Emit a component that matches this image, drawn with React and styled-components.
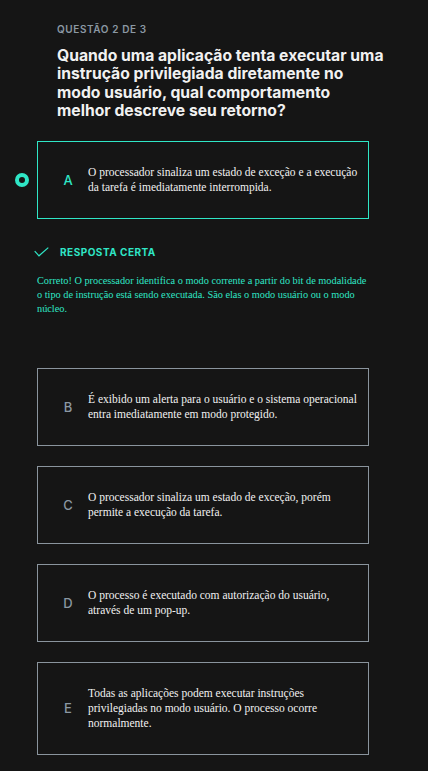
import React from 'react';
import styled, {createGlobalStyle} from 'styled-components';

//-- Colors --//
const colors = {
	bg: '#151515',
	teal: '#2fe6c6',
	text: '#f1f1f1',
	muted: '#8b98a3',
	border: '#8a949d',
};

const GlobalStyle = createGlobalStyle`
	html, body {
		margin: 0;
		padding: 0;
		background: ${colors.bg};
	}
	* {
		box-sizing: border-box;
	}
`;

const Page = styled.div`
	width: 428px;
	min-height: 771px;
	background: ${colors.bg};
	padding: 22px 59px 20px 0;
	font-family: Inter, 'Noto Sans', sans-serif;
`;

const Header = styled.div`
	padding-left: 57px;
	margin-right: -30px;
`;

const Counter = styled.div`
	color: ${colors.muted};
	font-size: 10px;
	font-weight: 600;
	letter-spacing: 0.6px;
	text-transform: uppercase;
	line-height: 14px;
`;

const Title = styled.h1`
	margin: 11px 0 0;
	max-width: 329px;
	color: ${colors.text};
	font-size: 15.7px;
	font-weight: 700;
	line-height: 18.4px;
	letter-spacing: 0;
`;

const Options = styled.div`
	margin-top: 20px;
	display: flex;
	flex-direction: column;
	gap: 20px;
`;

const OptionRow = styled.div`
	display: grid;
	grid-template-columns: 37px 1fr;
	align-items: center;
`;

const Ring = styled.span`
	display: block;
	width: 14px;
	height: 14px;
	margin-left: 15px;
	border-radius: 50%;
	border: 4px solid ${colors.teal};
	visibility: ${({$on}) => ($on ? 'visible' : 'hidden')};
`;

const OptionBox = styled.div`
	display: flex;
	align-items: center;
	padding: 23px 10px 23px 24px;
	border: 1px solid ${({$selected}) => ($selected ? colors.teal : colors.border)};
	min-height: 76px;
`;

const Letter = styled.span`
	flex: 0 0 12px;
	margin-right: 14px;
	text-align: center;
	color: ${({$selected}) => ($selected ? colors.teal : colors.muted)};
	font-size: 13px;
	font-weight: 500;
`;

const OptionText = styled.p`
	margin: 0;
	color: ${colors.text};
	font-family: 'Liberation Serif', serif;
	font-size: 11.5px;
	line-height: 15px;
`;

const Feedback = styled.div`
	padding-left: 37px;
	margin-top: 27px;
	margin-bottom: 32px;
`;

const Verdict = styled.div`
	display: flex;
	align-items: center;
	gap: 11px;
	color: ${colors.teal};
	font-size: 10px;
	font-weight: 700;
	letter-spacing: 0.5px;
	text-transform: uppercase;
	margin-left: -3px;
`;

const Explanation = styled.p`
	margin: 16px 0 0;
	color: ${colors.teal};
	font-family: 'Liberation Serif', serif;
	font-size: 10.3px;
	line-height: 14px;
`;

const Check = () => (
	<svg width='15' height='10' viewBox='0 0 15 10' fill='none'>
		<path d='M0.7 4.2 L5 8.8 L14.3 0.6' stroke={colors.teal} strokeWidth='1.2' />
	</svg>
);

const options = [
	{
		letter: 'A',
		text: 'O processador sinaliza um estado de exceção e a execução da tarefa é imediatamente interrompida.',
		selected: true,
	},
	{
		letter: 'B',
		text: 'É exibido um alerta para o usuário e o sistema operacional entra imediatamente em modo protegido.',
	},
	{
		letter: 'C',
		text: 'O processador sinaliza um estado de exceção, porém permite a execução da tarefa.',
	},
	{
		letter: 'D',
		text: 'O processo é executado com autorização do usuário, através de um pop-up.',
	},
	{
		letter: 'E',
		text: 'Todas as aplicações podem executar instruções privilegiadas no modo usuário. O processo ocorre normalmente.',
	},
];

const Option = ({letter, text, selected}) => (
	<OptionRow>
		<Ring $on={selected} />
		<OptionBox $selected={selected}>
			<Letter $selected={selected}>{letter}</Letter>
			<OptionText>{text}</OptionText>
		</OptionBox>
	</OptionRow>
);

const App = () => {
	const [first, ...rest] = options;

	return (
		<Page>
			<GlobalStyle />
			<Header>
				<Counter>Questão 2 de 3</Counter>
				<Title>
					Quando uma aplicação tenta executar uma instrução privilegiada
					diretamente no modo usuário, qual comportamento melhor descreve seu
					retorno?
				</Title>
			</Header>
			<Options>
				<div>
					<Option {...first} />
					<Feedback>
						<Verdict>
							<Check />
							Resposta certa
						</Verdict>
						<Explanation>
							Correto! O processador identifica o modo corrente a partir do bit
							de modalidade o tipo de instrução está sendo executada. São elas o
							modo usuário ou o modo núcleo.
						</Explanation>
					</Feedback>
				</div>
				{rest.map((o) => (
					<Option key={o.letter} {...o} />
				))}
			</Options>
		</Page>
	);
};

export default App;
